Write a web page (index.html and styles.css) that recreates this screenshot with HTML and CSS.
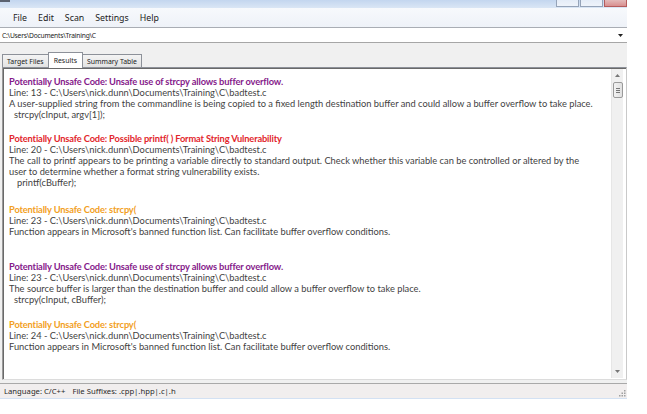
FILE: index.html
```html
<!DOCTYPE html>
<html>
<head>
<meta charset="utf-8">
<link rel="stylesheet" href="styles.css">
</head>
<body>
<div class="window">
  <div class="titlebar">
    <span class="sysmark"></span>
    <div class="caption-btns">
      <span class="cbtn"></span>
      <span class="cbtn"></span>
      <span class="cbtn close"></span>
    </div>
  </div>
  <div class="menubar">
    <span>File</span><span>Edit</span><span>Scan</span><span>Settings</span><span>Help</span>
  </div>
  <div class="combo">
    <span class="combo-text">C:\Users\Documents\Training\C</span>
    <svg class="combo-arrow" width="5" height="3" viewBox="0 0 5 3"><path d="M0 0H5L2.5 3Z" fill="#222"/></svg>
  </div>
  <div class="tabstrip">
    <span class="tab">Target Files</span>
    <span class="tab active">Results</span>
    <span class="tab">Summary Table</span>
  </div>
  <div class="panel">
    <div class="results">
      <div class="entry">
        <div class="head purple">Potentially Unsafe Code: Unsafe use of strcpy allows buffer overflow.</div>
        <div>Line: 13 - C:\Users\nick.dunn\Documents\Training\C\badtest.c</div>
        <div>A user-supplied string from the commandline is being copied to a fixed length destination buffer and could allow a buffer overflow to take place.</div>
        <div class="code">strcpy(cInput, argv[1]);</div>
      </div>
      <div class="entry gap-a">
        <div class="head red">Potentially Unsafe Code: Possible printf( ) Format String Vulnerability</div>
        <div>Line: 20 - C:\Users\nick.dunn\Documents\Training\C\badtest.c</div>
        <div>The call to printf appears to be printing a variable directly to standard output. Check whether this variable can be controlled or altered by the<br>user to determine whether a format string vulnerability exists.</div>
        <div class="code deep">printf(cBuffer);</div>
      </div>
      <div class="entry gap-b">
        <div class="head orange">Potentially Unsafe Code: strcpy(</div>
        <div>Line: 23 - C:\Users\nick.dunn\Documents\Training\C\badtest.c</div>
        <div>Function appears in Microsoft's banned function list. Can facilitate buffer overflow conditions.</div>
      </div>
      <div class="entry gap-c">
        <div class="head purple">Potentially Unsafe Code: Unsafe use of strcpy allows buffer overflow.</div>
        <div>Line: 23 - C:\Users\nick.dunn\Documents\Training\C\badtest.c</div>
        <div>The source buffer is larger than the destination buffer and could allow a buffer overflow to take place.</div>
        <div class="code">strcpy(cInput, cBuffer);</div>
      </div>
      <div class="entry gap-d">
        <div class="head orange">Potentially Unsafe Code: strcpy(</div>
        <div>Line: 24 - C:\Users\nick.dunn\Documents\Training\C\badtest.c</div>
        <div>Function appears in Microsoft's banned function list. Can facilitate buffer overflow conditions.</div>
      </div>
    </div>
    <div class="scrollbar">
      <svg class="sb-arrow" width="5" height="3" viewBox="0 0 5 3"><path d="M0 3H5L2.5 0Z" fill="#777"/></svg>
      <div class="sb-thumb"><span></span><span></span><span></span></div>
      <div class="sb-track"></div>
      <svg class="sb-arrow" width="5" height="3" viewBox="0 0 5 3"><path d="M0 0H5L2.5 3Z" fill="#777"/></svg>
    </div>
  </div>
  <div class="status">
    <span>Language: C/C++</span><span>File Suffixes: .cpp|.hpp|.c|.h</span>
    <svg class="grip" width="7" height="7" viewBox="0 0 7 7" fill="#a0a0a0">
      <rect x="5" y="0" width="1.5" height="1.5"/><rect x="2.5" y="2.5" width="1.5" height="1.5"/><rect x="5" y="2.5" width="1.5" height="1.5"/>
      <rect x="0" y="5" width="1.5" height="1.5"/><rect x="2.5" y="5" width="1.5" height="1.5"/><rect x="5" y="5" width="1.5" height="1.5"/>
    </svg>
  </div>
</div>
</body>
</html>
```
FILE: styles.css
```css
html, body {
  margin: 0;
  padding: 0;
  background: #ffffff;
}
body {
  width: 647px;
  height: 414px;
  overflow: hidden;
  font-family: "Noto Sans", "Open Sans", sans-serif;
}
.window {
  width: 627px;
  height: 398px;
  display: flex;
  flex-direction: column;
  background: #f0f0f0;
}
.titlebar {
  height: 8px;
  flex: none;
  display: flex;
  justify-content: space-between;
  align-items: flex-start;
  background: linear-gradient(#c3d6ef, #dae6f5);
}
.sysmark {
  width: 10px;
  height: 2px;
  background: #5b6270;
}
.caption-btns {
  display: flex;
  gap: 1px;
}
.cbtn {
  width: 21px;
  height: 6px;
  border: 1px solid #95a3b8;
  border-top: none;
  background: linear-gradient(#e4ecf7, #eef3fa);
}
.cbtn.close {
  border-color: #b55c5c;
  background: linear-gradient(#e3b9b9, #d98f8f);
}
.menubar {
  height: 19px;
  flex: none;
  display: flex;
  align-items: center;
  gap: 11px;
  padding-left: 13px;
  font-size: 8.8px;
  color: #1b1b1b;
  background: linear-gradient(#f7f9fc, #eef2f8);
  border-bottom: 1px solid #a9adb4;
}
.combo {
  height: 14px;
  flex: none;
  display: flex;
  align-items: center;
  justify-content: space-between;
  padding: 0 3px 0 2px;
  background: #ffffff;
  border-bottom: 1px solid #a6a6a6;
  font-size: 6.7px;
  letter-spacing: -0.2px;
  color: #1b1b1b;
}
.combo-arrow {
  margin-right: 1px;
}
.tabstrip {
  height: 24px;
  flex: none;
  display: flex;
  align-items: flex-end;
  padding-left: 2px;
}
.tab {
  height: 12px;
  padding: 0 4px;
  display: flex;
  align-items: center;
  font-size: 6.9px;
  color: #1b1b1b;
  border: 1px solid #8d9199;
  border-bottom: none;
  background: linear-gradient(#f4f4f4, #e3e3e3);
  margin-right: -1px;
}
.tab.active {
  height: 15px;
  padding: 0 5px;
  background: #ffffff;
  position: relative;
  z-index: 1;
  margin-bottom: -1px;
}
.panel {
  height: 311px;
  flex: none;
  margin-left: 2px;
  display: flex;
  background: #ffffff;
  border-top: 1px solid #8d9199;
  border-left: 1px solid #9a9a9a;
  border-right: 1px solid #c9c9c9;
  border-bottom: 1px solid #dcdcdc;
  box-shadow: inset 1px 1px 0 #696969;
}
.results {
  flex: 1;
  padding: 8px 0 0 6px;
  font-family: "Lato", "DejaVu Sans", sans-serif;
  font-size: 9.3px;
  line-height: 11px;
  color: #3f3f3f;
  white-space: nowrap;
  overflow: hidden;
}
.head {
  font-weight: bold;
  letter-spacing: -0.15px;
}
.purple { color: #85198a; }
.red { color: #e2262c; }
.orange { color: #f2a01e; }
.code { padding-left: 5px; }
.code.deep { padding-left: 8px; }
.gap-a { margin-top: 13px; }
.gap-b { margin-top: 16px; }
.gap-c { margin-top: 24px; }
.gap-d { margin-top: 14px; }
.scrollbar {
  width: 11px;
  margin: 1px 3px 1px 0;
  display: flex;
  flex-direction: column;
  align-items: center;
  background: #f0f0f0;
  border-left: 1px solid #e6e6e6;
}
.sb-arrow {
  margin: 5px 0 5px;
  flex: none;
}
.sb-thumb {
  width: 8px;
  height: 14px;
  flex: none;
  border: 1px solid #9a9a9a;
  border-radius: 2px;
  background: linear-gradient(90deg, #f2f2f2, #e0e0e0);
  display: flex;
  flex-direction: column;
  align-items: center;
  justify-content: center;
  gap: 1px;
}
.sb-thumb span {
  width: 4px;
  height: 1px;
  background: #777;
}
.sb-track {
  flex: 1;
}
.status {
  height: 14px;
  flex: none;
  margin-top: 3px;
  display: flex;
  align-items: center;
  gap: 7px;
  padding-left: 4px;
  position: relative;
  font-size: 7.7px;
  color: #2a2a2a;
  background: #f1eeee;
  border-top: 1px solid #a9a9a9;
  border-bottom: 1px solid #d3e1f3;
}
.grip {
  position: absolute;
  right: 1px;
  bottom: 1px;
}
```
